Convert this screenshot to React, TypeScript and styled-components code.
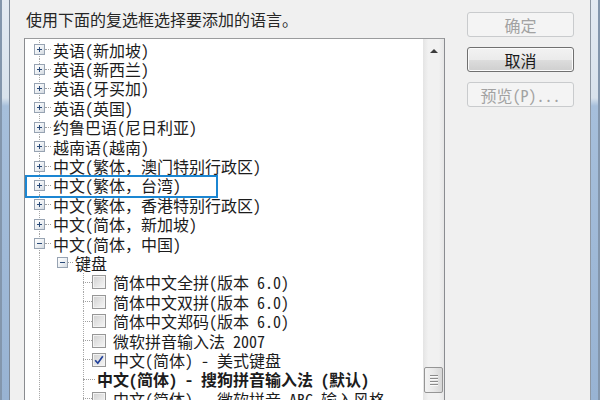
import React from 'react'
import styled, { createGlobalStyle, css } from 'styled-components'

const GlobalStyle = createGlobalStyle`
  html, body {
    margin: 0;
    padding: 0;
    background: #f0f0f0;
  }
  body {
    font-family: "Noto Sans Mono CJK SC", "Noto Sans CJK SC", sans-serif;
  }
`

const Screen = styled.div`
  width: 600px;
  height: 400px;
  display: flex;
  overflow: hidden;
`

const Frame = styled.div<{ $side: 'left' | 'right' }>`
  width: 10px;
  flex: none;
  box-sizing: border-box;
  background: linear-gradient(to bottom, #e3eaf2 0, #d8e2ec 98px, #a6bfdb 106px, #98b3d3 100%);
  ${p =>
    p.$side === 'left'
      ? css`
          border-left: 2px solid #8396ac;
          border-right: 1px solid #7d8998;
        `
      : css`
          border-left: 1px solid #8d97a3;
          border-right: 2px solid #8396ac;
        `}
`

const Dialog = styled.div`
  flex: 1;
  display: flex;
  background: #f0f0f0;
  padding-left: 14px;
`

const MainCol = styled.div`
  width: 421px;
  display: flex;
  flex-direction: column;
`

const Prompt = styled.div`
  margin-top: 11px;
  height: 16px;
  line-height: 16px;
  font-size: 16px;
  color: #262626;
  padding-left: 2px;
  white-space: nowrap;
`

const TreeBox = styled.div`
  margin-top: 11px;
  height: 380px;
  flex: none;
  box-sizing: border-box;
  border: 1px solid #8a8c90;
  border-top-color: #9a9b9d;
  background: #fff;
  display: flex;
`

const TreeList = styled.div`
  flex: 1;
  padding-top: 1px;
  overflow: hidden;
`

const Row = styled.div<{ $indent: number; $guides: number[]; $focused?: boolean }>`
  position: relative;
  height: 19.4px;
  display: flex;
  align-items: center;
  padding-left: ${p => p.$indent}px;
  background-image: ${p =>
    p.$guides.map(() => 'repeating-linear-gradient(to bottom, #a8a8a8 0 1px, transparent 1px 2px)').join(', ')};
  background-size: 1px 100%;
  background-position: ${p => p.$guides.map(g => `${g}px 0`).join(', ')};
  background-repeat: no-repeat;
  ${p =>
    p.$focused &&
    css`
      &::after {
        content: '';
        position: absolute;
        left: 0;
        top: -1px;
        width: 193px;
        height: 23px;
        box-sizing: border-box;
        border: 2px solid #1b86d2;
      }
    `}
`

const Connector = styled.span<{ $w: number; $gap: number }>`
  width: ${p => p.$w}px;
  margin-right: ${p => p.$gap}px;
  flex: none;
  border-top: 1px dotted #a0a0a0;
`

const ExpanderBox = styled.span`
  width: 11px;
  height: 11px;
  flex: none;
  box-sizing: border-box;
  border: 1px solid #97a3b2;
  background: linear-gradient(135deg, #ffffff 0%, #eef1f4 50%, #d3d9e0 100%);
  display: flex;
  align-items: center;
  justify-content: center;
`

const CheckBox = styled.span`
  width: 14px;
  height: 14px;
  flex: none;
  box-sizing: border-box;
  margin-right: 7px;
  border: 1px solid #979797;
  background: linear-gradient(135deg, #cfcfcf 0%, #e4e4e4 50%, #f6f6f6 100%);
  box-shadow: inset 0 0 0 1px #f3f3f3;
  display: flex;
  align-items: center;
  justify-content: center;
`

const Label = styled.span<{ $bold?: boolean }>`
  font-size: 16px;
  line-height: 16px;
  white-space: nowrap;
  color: #1c1c1c;
  font-weight: ${p => (p.$bold ? 700 : 400)};
`

const ScrollBar = styled.div`
  width: 21px;
  flex: none;
  display: flex;
  flex-direction: column;
  background: linear-gradient(to right, #e4e4e4 0, #f1f1f1 25%, #f1f1f1 75%, #e6e6e6 100%);
`

const ArrowButton = styled.div`
  height: 23px;
  display: flex;
  align-items: center;
  justify-content: center;
  &::before {
    content: '';
    width: 0;
    height: 0;
    border-left: 4px solid transparent;
    border-right: 4px solid transparent;
    border-bottom: 4px solid #3c3c3c;
  }
`

const Thumb = styled.div<{ $offset: number }>`
  margin: ${p => p.$offset}px 0 0 1px;
  width: 19px;
  height: 26px;
  box-sizing: border-box;
  border: 1px solid #959595;
  border-radius: 2px;
  background: linear-gradient(to right, #f3f3f3 0%, #e8e8e8 50%, #d6d6d6 100%);
  display: flex;
  flex-direction: column;
  align-items: center;
  justify-content: center;
  gap: 2px;
`

const Grip = styled.span`
  width: 8px;
  height: 1px;
  background: #8c8c8c;
  box-shadow: 0 1px 0 #fafafa;
`

const ButtonCol = styled.div`
  margin-left: 22px;
  width: 107px;
  padding-top: 12px;
  display: flex;
  flex-direction: column;
  gap: 10px;
`

const Button = styled.div<{ $disabled?: boolean }>`
  height: 25px;
  box-sizing: border-box;
  border-radius: 3px;
  display: flex;
  align-items: center;
  justify-content: center;
  font-size: 16px;
  ${p =>
    p.$disabled
      ? css`
          border: 1px solid #c9cbcd;
          background: #f4f4f4;
          color: #a2a2a2;
        `
      : css`
          border: 1px solid #707070;
          background: linear-gradient(to bottom, #f2f2f2 0%, #ebebeb 50%, #dddddd 51%, #cfcfcf 100%);
          box-shadow: inset 0 0 0 1px #fbfbfb;
          color: #1a1a1a;
        `}
`

type Kind = 'plus' | 'minus' | 'check' | 'checked' | 'none'

type Item = {
  label: string
  level: 0 | 1 | 2
  kind: Kind
  bold?: boolean
  focused?: boolean
}

const items: Item[] = [
  { label: '英语(新加坡)', level: 0, kind: 'plus' },
  { label: '英语(新西兰)', level: 0, kind: 'plus' },
  { label: '英语(牙买加)', level: 0, kind: 'plus' },
  { label: '英语(英国)', level: 0, kind: 'plus' },
  { label: '约鲁巴语(尼日利亚)', level: 0, kind: 'plus' },
  { label: '越南语(越南)', level: 0, kind: 'plus' },
  { label: '中文(繁体，澳门特别行政区)', level: 0, kind: 'plus' },
  { label: '中文(繁体，台湾)', level: 0, kind: 'plus', focused: true },
  { label: '中文(繁体，香港特别行政区)', level: 0, kind: 'plus' },
  { label: '中文(简体，新加坡)', level: 0, kind: 'plus' },
  { label: '中文(简体，中国)', level: 0, kind: 'minus' },
  { label: '键盘', level: 1, kind: 'minus' },
  { label: '简体中文全拼(版本 6.0)', level: 2, kind: 'check' },
  { label: '简体中文双拼(版本 6.0)', level: 2, kind: 'check' },
  { label: '简体中文郑码(版本 6.0)', level: 2, kind: 'check' },
  { label: '微软拼音输入法 2007', level: 2, kind: 'check' },
  { label: '中文(简体) - 美式键盘', level: 2, kind: 'checked' },
  { label: '中文(简体) - 搜狗拼音输入法 (默认)', level: 2, kind: 'none', bold: true },
  { label: '中文(简体) - 微软拼音 ABC 输入风格', level: 2, kind: 'check' },
]

function Expander({ open }: { open: boolean }) {
  return (
    <ExpanderBox>
      <svg width="9" height="9" viewBox="0 0 9 9">
        <rect x="2" y="4" width="5" height="1" fill="#2a4a78" />
        {!open && <rect x="4" y="2" width="1" height="5" fill="#2a4a78" />}
      </svg>
    </ExpanderBox>
  )
}

function Check({ checked }: { checked: boolean }) {
  return (
    <CheckBox>
      {checked && (
        <svg width="12" height="12" viewBox="0 0 12 12">
          <path d="M2.2 6.2 L4.8 9.2 L9.8 2.2" fill="none" stroke="#20409a" strokeWidth="1.7" />
        </svg>
      )}
    </CheckBox>
  )
}

function TreeRow({ item }: { item: Item }) {
  if (item.level === 0) {
    return (
      <Row $indent={9} $guides={[14]} $focused={item.focused}>
        <Expander open={item.kind === 'minus'} />
        <Connector $w={6} $gap={2} />
        <Label>{item.label}</Label>
      </Row>
    )
  }
  if (item.level === 1) {
    return (
      <Row $indent={32} $guides={[14]}>
        <Expander open={item.kind === 'minus'} />
        <Connector $w={5} $gap={2} />
        <Label>{item.label}</Label>
      </Row>
    )
  }
  const hasBox = item.kind === 'check' || item.kind === 'checked'
  return (
    <Row $indent={58} $guides={[14, 58]}>
      <Connector $w={hasBox ? 9 : 12} $gap={hasBox ? 0 : 2} />
      {hasBox && <Check checked={item.kind === 'checked'} />}
      <Label $bold={item.bold}>{item.label}</Label>
    </Row>
  )
}

export default function App() {
  return (
    <>
      <GlobalStyle />
      <Screen>
        <Frame $side="left" />
        <Dialog>
          <MainCol>
            <Prompt>使用下面的复选框选择要添加的语言。</Prompt>
            <TreeBox>
              <TreeList>
                {items.map(item => (
                  <TreeRow key={item.label} item={item} />
                ))}
              </TreeList>
              <ScrollBar>
                <ArrowButton />
                <Thumb $offset={305}>
                  <Grip />
                  <Grip />
                  <Grip />
                  <Grip />
                </Thumb>
              </ScrollBar>
            </TreeBox>
          </MainCol>
          <ButtonCol>
            <Button $disabled>确定</Button>
            <Button>取消</Button>
            <Button $disabled>预览(P)...</Button>
          </ButtonCol>
        </Dialog>
        <Frame $side="right" />
      </Screen>
    </>
  )
}
